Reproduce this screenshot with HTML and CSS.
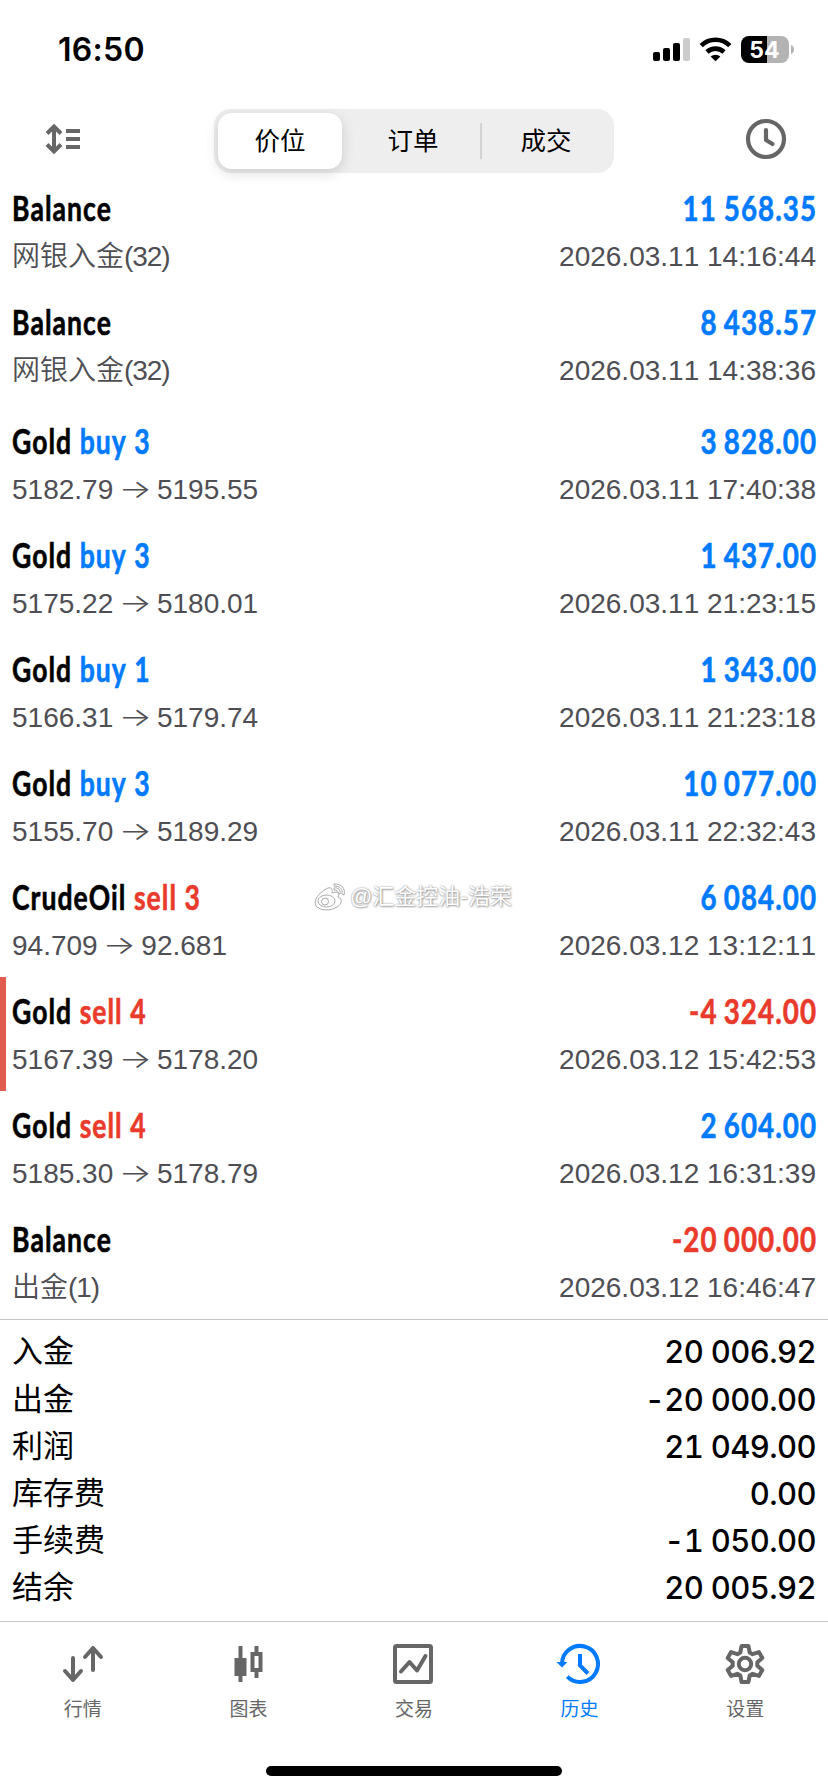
FILE: index.html
```html
<!DOCTYPE html>
<html lang="zh-CN">
<head>
<meta charset="utf-8">
<title>历史</title>
<link rel="stylesheet" href="styles.css">
</head>
<body>
<div class="screen">
  <header class="status">
    <span class="clock">16:50</span>
    <svg class="status-icons" viewBox="650 32 148 34">
      <rect x="653" y="52" width="7" height="9" rx="2"/>
      <rect x="663" y="48" width="7" height="13" rx="2"/>
      <rect x="673" y="43" width="7" height="18" rx="2"/>
      <rect x="683" y="38" width="7" height="23" rx="2" fill="#ccc"/>
      <g fill="none" stroke="#000" stroke-width="4.6">
        <path d="M701.2 45.6a20.5 20.5 0 0 1 28.6 0"/>
        <path d="M707 52a12.3 12.3 0 0 1 17 0"/>
      </g>
      <path d="M710.6 56.6a7.4 7.4 0 0 1 9.8 0l-4.9 4.7z"/>
      <path d="M749 36h18v27h-18a8 8 0 0 1-8-8V44a8 8 0 0 1 8-8z"/>
      <path d="M767 36h14a8 8 0 0 1 8 8v11a8 8 0 0 1-8 8h-14z" fill="#b3b3b3"/>
      <path d="M791 45q3 1.2 3 4.5t-3 4.500z" fill="#b3b3b3"/>
      <text class="battery-text" x="764.500" y="57.500" text-anchor="middle">54</text>
    </svg>
  </header>

  <nav class="toolbar">
    <svg class="sort-icon" viewBox="42 120 42 38">
      <path d="M54 127v24M47 133.500l7-7 7 7M47 144.500l7 7 7-7" fill="none" stroke="#666" stroke-width="4"/>
      <path d="M66 129h14v4H66zM66 137h14v4H66zM66 145h14v4H66z" fill="#666"/>
    </svg>
    <div class="segmented">
      <span class="segment active">价位</span>
      <span class="segment middle">订单</span>
      <i class="segment-line"></i>
      <span class="segment">成交</span>
    </div>
    <svg class="clock-icon" viewBox="744 117 44 44">
      <g fill="none" stroke="#666" stroke-width="4.200" stroke-linecap="round" stroke-linejoin="round">
        <circle cx="766" cy="139" r="18"/>
        <path d="M766 130v10l6.500 4"/>
      </g>
    </svg>
  </nav>

  <main class="deals">
    <section class="row"><div class="line"><b class="name">Balance</b><b class="sum plus wide">11 568.35</b></div><div class="sub"><span>网银入金<i class="count">(32)</i></span><span>2026.03.11 14:16:44</span></div></section>
    <section class="row spaced"><div class="line"><b class="name">Balance</b><b class="sum plus">8 438.57</b></div><div class="sub"><span>网银入金<i class="count">(32)</i></span><span>2026.03.11 14:38:36</span></div></section>
    <section class="row"><div class="line"><b class="name">Gold <em class="buy">buy 3</em></b><b class="sum plus">3 828.00</b></div><div class="sub"><span>5182.79<i class="arrow">→</i>5195.55</span><span>2026.03.11 17:40:38</span></div></section>
    <section class="row"><div class="line"><b class="name">Gold <em class="buy">buy 3</em></b><b class="sum plus">1 437.00</b></div><div class="sub"><span>5175.22<i class="arrow">→</i>5180.01</span><span>2026.03.11 21:23:15</span></div></section>
    <section class="row"><div class="line"><b class="name">Gold <em class="buy">buy 1</em></b><b class="sum plus">1 343.00</b></div><div class="sub"><span>5166.31<i class="arrow">→</i>5179.74</span><span>2026.03.11 21:23:18</span></div></section>
    <section class="row"><div class="line"><b class="name">Gold <em class="buy">buy 3</em></b><b class="sum plus">10 077.00</b></div><div class="sub"><span>5155.70<i class="arrow">→</i>5189.29</span><span>2026.03.11 22:32:43</span></div></section>
    <section class="row"><div class="line"><b class="name">CrudeOil <em class="sell">sell 3</em></b><b class="sum plus">6 084.00</b></div><div class="sub"><span>94.709<i class="arrow">→</i>92.681</span><span>2026.03.12 13:12:11</span></div>
      <div class="watermark">
        <svg viewBox="0 0 32 28">
          <g fill="#fff" stroke="#aaa" stroke-width="1">
            <path d="M12 6C17 3 19 6 18 10c5-2 8 0 6 4 5 2 4 7-1 10-6 4-17 4-21-1C-1 17 5 10 12 6z"/>
            <ellipse cx="12.500" cy="18" rx="8.500" ry="6"/>
            <circle cx="11" cy="18.500" r="3.500"/>
            <path d="M20 1c7-1 12 5 10 11l-2-1c1-5-2-8-8-8zM20 5c4-1 7 2 6 6l-2-1c0-2-1-3-4-3z"/>
          </g>
        </svg>
        <span>@汇金控油-浩荣</span>
      </div>
    </section>
    <section class="row marked"><div class="line"><b class="name">Gold <em class="sell">sell 4</em></b><b class="sum minus">-4 324.00</b></div><div class="sub"><span>5167.39<i class="arrow">→</i>5178.20</span><span>2026.03.12 15:42:53</span></div></section>
    <section class="row"><div class="line"><b class="name">Gold <em class="sell">sell 4</em></b><b class="sum plus">2 604.00</b></div><div class="sub"><span>5185.30<i class="arrow">→</i>5178.79</span><span>2026.03.12 16:31:39</span></div></section>
    <section class="row"><div class="line"><b class="name">Balance</b><b class="sum minus">-20 000.00</b></div><div class="sub"><span>出金<i class="count">(1)</i></span><span>2026.03.12 16:46:47</span></div></section>
  </main>

  <section class="totals">
    <div class="total"><span>入金</span><span class="num">20 006.92</span></div>
    <div class="total"><span>出金</span><span class="num">-20 000.00</span></div>
    <div class="total"><span>利润</span><span class="num">21 049.00</span></div>
    <div class="total"><span>库存费</span><span class="num">0.00</span></div>
    <div class="total"><span>手续费</span><span class="num">-1 050.00</span></div>
    <div class="total"><span>结余</span><span class="num">20 005.92</span></div>
  </section>

  <footer class="tabs">
    <div class="tab">
      <svg viewBox="59 1642 48 44"><path d="M73 1658v22M65 1671l8 9 8-9M93 1670v-22M85 1657l8-9 8 9" fill="none" stroke="#666" stroke-width="4" stroke-linecap="round" stroke-linejoin="round"/></svg>
      <span>行情</span>
    </div>
    <div class="tab">
      <svg viewBox="224.500 1642 48 44"><path fill-rule="evenodd" fill="#666" d="M239 1646h4v12h4v18h-4v6h-4v-6h-4v-18h4zM255 1646h4v6h4v20h-4v6h-4v-6h-4v-20h4zM255 1656v12h4v-12z"/></svg>
      <span>图表</span>
    </div>
    <div class="tab">
      <svg viewBox="390 1642 48 44"><g fill="none" stroke="#666" stroke-width="4" stroke-linecap="round" stroke-linejoin="round"><rect x="395" y="1646" width="36" height="36" rx="1.500"/><path d="M401 1671.500l8.500-9.500 7.500 8.500 8.500-14.500"/></g></svg>
      <span>交易</span>
    </div>
    <div class="tab current">
      <svg viewBox="555 1642 48 44"><path d="M561 1664a18 18 0 1 1 5.300 12.700M579 1654v11.500l8 8" fill="none" stroke="#007aff" stroke-width="4"/><path d="M555.500 1662h11l-5.500 5.500z" fill="#007aff"/></svg>
      <span>历史</span>
    </div>
    <div class="tab">
      <svg viewBox="-24 -22 48 44"><g fill="none" stroke="#666" stroke-width="4" stroke-linejoin="round"><path d="M-3.400-18H3.400L4.700-11.500 7.610-9.820 13.890-11.940 17.290-6.060 12.310-1.680V1.680L17.290 6.060 13.890 11.940 7.610 9.820 4.700 11.500 3.400 18H-3.400L-4.700 11.500-7.610 9.820-13.890 11.940-17.290 6.060-12.310 1.680V-1.680L-17.290-6.060-13.890-11.940-7.610-9.820-4.700-11.500z"/><circle r="6.200"/></g></svg>
      <span>设置</span>
    </div>
  </footer>
  <div class="home"></div>
</div>
</body>
</html>
```
FILE: styles.css
```css
* { box-sizing: border-box; }
body { margin: 0; background: #fff; color: #000; font-family: "Liberation Sans", "Noto Sans CJK SC", sans-serif; }
svg { display: block; flex: none; }
.screen { width: 828px; height: 1792px; display: flex; flex-direction: column; overflow: hidden; }
.status { height: 109px; display: flex; justify-content: space-between; align-items: flex-start; padding: 30px 30px 0 58px; }
.clock { font: 600 32px/40px Inter, sans-serif; letter-spacing: .3px; }
.status-icons { width: 148px; height: 34px; margin-top: 2px; }
.battery-text { font: 700 23px Inter, sans-serif; fill: #fff; }
.toolbar { height: 65px; display: flex; justify-content: space-between; align-items: flex-start; padding: 0 40px 0 42px; }
.sort-icon { width: 42px; height: 38px; margin-top: 11px; }
.clock-icon { width: 44px; height: 44px; margin-top: 8px; }
.segmented { width: 400px; height: 64px; margin-left: 130px; margin-right: auto; display: flex; align-items: center; padding: 4px; background: #eee; border-radius: 17px; }
.segment { flex: 1; text-align: center; font-size: 25.500px; line-height: 56px; }
.segment.active { flex: none; width: 124px; margin-right: 4px; background: #fff; border-radius: 14px; box-shadow: 0 4px 14px rgba(0,0,0,.14); }
.segment.middle { flex: none; width: 134px; }
.segment-line { width: 2px; height: 36px; background: #d2d2d2; }
.row { position: relative; height: 114px; padding: 11px 12px 0 12px; }
.spaced { margin-bottom: 5px; }
.line { height: 46px; margin-bottom: 4px; display: flex; justify-content: space-between; font: 700 34px/46px Lato, sans-serif; white-space: pre; font-kerning: none; -webkit-text-stroke: .6px currentColor; }
.line b { font-weight: 700; }
.name { transform: scaleX(.78); transform-origin: 0 0; letter-spacing: 1.3px; }
.sum { transform: scaleX(.815); transform-origin: 100% 0; letter-spacing: 1.3px; word-spacing: -2px; margin-right: -1px; }
.wide { word-spacing: -1px; }
em { font-style: normal; -webkit-text-stroke: .6px currentColor; }
.plus, .buy { color: #007aff; }
.minus, .sell { color: #e93a2b; }
.sub { display: flex; justify-content: space-between; font-size: 28px; font-weight: 350; line-height: 44px; color: #4e4e54; font-kerning: none; }
.count { font-style: normal; letter-spacing: -1.1px; }
.arrow { display: inline-block; transform: scale(1.24, .9); font: 300 28px/30px Inter, sans-serif; margin: 0 8.500px; }
.marked::before { content: ""; position: absolute; left: 0; top: 0; width: 6px; height: 114px; background: #e15b4f; }
.watermark { position: absolute; left: 314px; top: 18px; display: flex; align-items: center; gap: 4px; font-size: 22px; line-height: 32px; color: #fff; text-shadow: 0 0 2px #888, 1px 1px 2px #aaa; }
.watermark svg { width: 32px; height: 28px; }
.totals { height: 302px; border-top: 1px solid #c6c6c8; padding: 8px 13px 0 12px; }
.total { display: flex; justify-content: space-between; align-items: center; height: 47px; font-size: 31px; line-height: 47px; }
.total:first-child { margin-bottom: 1px; }
.num { font: 500 31px/47px Inter, sans-serif; font-kerning: none; font-variant-numeric: tabular-nums; letter-spacing: -.6px; margin-right: -1px; }
.tabs { height: 145px; border-top: 1px solid #c6c6c8; display: flex; padding-top: 20px; }
.tab { flex: 1; display: flex; flex-direction: column; align-items: center; font-size: 19px; line-height: 24px; color: #666; gap: 12px; }
.tab svg { width: 48px; height: 44px; }
.current { color: #007aff; }
.home { width: 296px; height: 10px; margin: 0 auto; border-radius: 5px; background: #000; }
```
